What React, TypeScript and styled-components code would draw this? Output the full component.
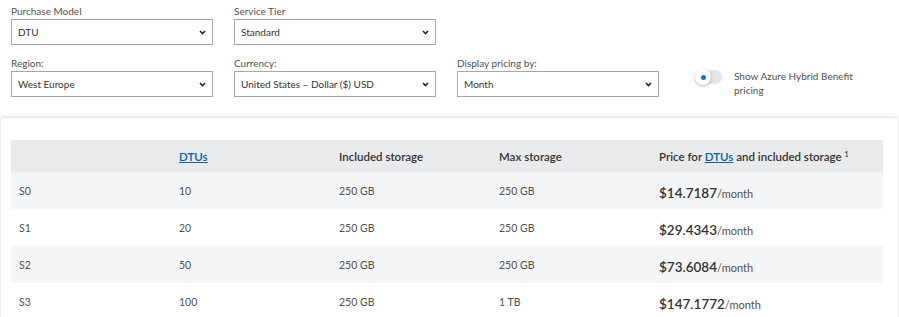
import styled, { createGlobalStyle } from "styled-components";

const GlobalStyle = createGlobalStyle`
  body {
    margin: 0;
    background: #ffffff;
    font-family: Lato, "Open Sans", sans-serif;
    color: #333333;
  }
`;

const Page = styled.div`
  width: 899px;
  height: 317px;
  overflow: hidden;
  background: #ffffff;
`;

const Filters = styled.div`
  display: flex;
  flex-direction: column;
  gap: 12px;
  padding: 5px 0 0 11px;
`;

const FilterRow = styled.div`
  display: flex;
  align-items: flex-start;
  gap: 21px;
`;

const Field = styled.div`
  display: flex;
  flex-direction: column;
  width: 202px;
`;

const Label = styled.label`
  font-size: 10px;
  line-height: 13px;
  color: #505050;
  margin-bottom: 1px;
`;

const SelectBox = styled.div`
  box-sizing: border-box;
  height: 26px;
  border: 1px solid #a6a6a6;
  display: flex;
  align-items: center;
  justify-content: space-between;
  padding: 0 6px 0 6px;
  font-size: 10px;
  color: #333333;
  background: #ffffff;
`;

const Chevron = () => (
  <svg width="7" height="5" viewBox="0 0 7 5">
    <path d="M1 1 L3.5 3.6 L6 1" fill="none" stroke="#222" strokeWidth="1.5" />
  </svg>
);

const ToggleWrap = styled.div`
  display: flex;
  align-items: flex-start;
  gap: 12px;
  margin-left: 18px;
  margin-top: 12px;
`;

const Track = styled.div`
  position: relative;
  width: 24px;
  height: 14px;
  margin-top: 1px;
  border-radius: 7px;
  background: #e6e6e6;
  flex-shrink: 0;
`;

const Knob = styled.div`
  position: absolute;
  left: -3px;
  top: -1px;
  width: 16px;
  height: 16px;
  border-radius: 50%;
  background: #ffffff;
  box-shadow: 0 1px 3px rgba(0, 0, 0, 0.3);
  display: flex;
  align-items: center;
  justify-content: center;
  &::after {
    content: "";
    width: 5px;
    height: 5px;
    border-radius: 50%;
    background: #0078d4;
  }
`;

const ToggleText = styled.div`
  font-size: 10px;
  line-height: 14px;
  color: #505050;
  width: 130px;
`;

const Card = styled.div`
  margin: 21px 1px 0 1px;
  padding: 22px 15px 0 10px;
  box-shadow: 0 -2px 4px rgba(0, 0, 0, 0.08), 0 0 2px rgba(0, 0, 0, 0.1);
  height: 200px;
`;

const Table = styled.div`
  display: grid;
  grid-template-columns: 160px 160px 160px 160px 232px;
`;

const Cell = styled.div<{ $bg: string; $head?: boolean }>`
  background: ${(p) => p.$bg};
  height: ${(p) => (p.$head ? "32px" : "37px")};
  display: flex;
  align-items: center;
  padding-left: 8px;
  font-size: ${(p) => (p.$head ? "11.5px" : "10.5px")};
  font-weight: ${(p) => (p.$head ? 600 : 400)};
  color: ${(p) => (p.$head ? "#333333" : "#505050")};
  white-space: nowrap;
`;

const Link = styled.a`
  color: #0062ad;
  text-decoration: underline;
  margin: 0 3px;
  &:first-child {
    margin-left: 0;
  }
`;

const Sup = styled.sup`
  font-size: 7px;
  margin-left: 3px;
  position: relative;
  top: -2px;
`;

const Price = styled.span`
  font-size: 13.5px;
  font-weight: 600;
  color: #333333;
  margin-top: 4px;
`;

const Per = styled.span`
  font-size: 11px;
  color: #505050;
  margin-top: 6px;
`;

const rows = [
  { tier: "S0", dtu: "10", inc: "250 GB", max: "250 GB", price: "$14.7187" },
  { tier: "S1", dtu: "20", inc: "250 GB", max: "250 GB", price: "$29.4343" },
  { tier: "S2", dtu: "50", inc: "250 GB", max: "250 GB", price: "$73.6084" },
  { tier: "S3", dtu: "100", inc: "250 GB", max: "1 TB", price: "$147.1772" },
];

const head = "#e9eaec";

export default function App() {
  return (
    <Page>
      <GlobalStyle />
      <Filters>
        <FilterRow>
          <Field>
            <Label>Purchase Model</Label>
            <SelectBox>
              DTU <Chevron />
            </SelectBox>
          </Field>
          <Field>
            <Label>Service Tier</Label>
            <SelectBox>
              Standard <Chevron />
            </SelectBox>
          </Field>
        </FilterRow>
        <FilterRow>
          <Field>
            <Label>Region:</Label>
            <SelectBox>
              West Europe <Chevron />
            </SelectBox>
          </Field>
          <Field>
            <Label>Currency:</Label>
            <SelectBox>
              United States – Dollar ($) USD <Chevron />
            </SelectBox>
          </Field>
          <Field>
            <Label>Display pricing by:</Label>
            <SelectBox>
              Month <Chevron />
            </SelectBox>
          </Field>
          <ToggleWrap>
            <Track>
              <Knob />
            </Track>
            <ToggleText>Show Azure Hybrid Benefit pricing</ToggleText>
          </ToggleWrap>
        </FilterRow>
      </Filters>
      <Card>
        <Table>
          <Cell $bg={head} $head />
          <Cell $bg={head} $head>
            <Link>DTUs</Link>
          </Cell>
          <Cell $bg={head} $head>Included storage</Cell>
          <Cell $bg={head} $head>Max storage</Cell>
          <Cell $bg={head} $head>
            Price for&nbsp;<Link>DTUs</Link>and included storage<Sup>1</Sup>
          </Cell>
          {rows.map((r, i) => {
            const bg = i % 2 === 0 ? "#f4f5f7" : "#ffffff";
            return [
              <Cell key={r.tier + "a"} $bg={bg}>{r.tier}</Cell>,
              <Cell key={r.tier + "b"} $bg={bg}>{r.dtu}</Cell>,
              <Cell key={r.tier + "c"} $bg={bg}>{r.inc}</Cell>,
              <Cell key={r.tier + "d"} $bg={bg}>{r.max}</Cell>,
              <Cell key={r.tier + "e"} $bg={bg}>
                <Price>{r.price}</Price>
                <Per>/month</Per>
              </Cell>,
            ];
          })}
        </Table>
      </Card>
    </Page>
  );
}
